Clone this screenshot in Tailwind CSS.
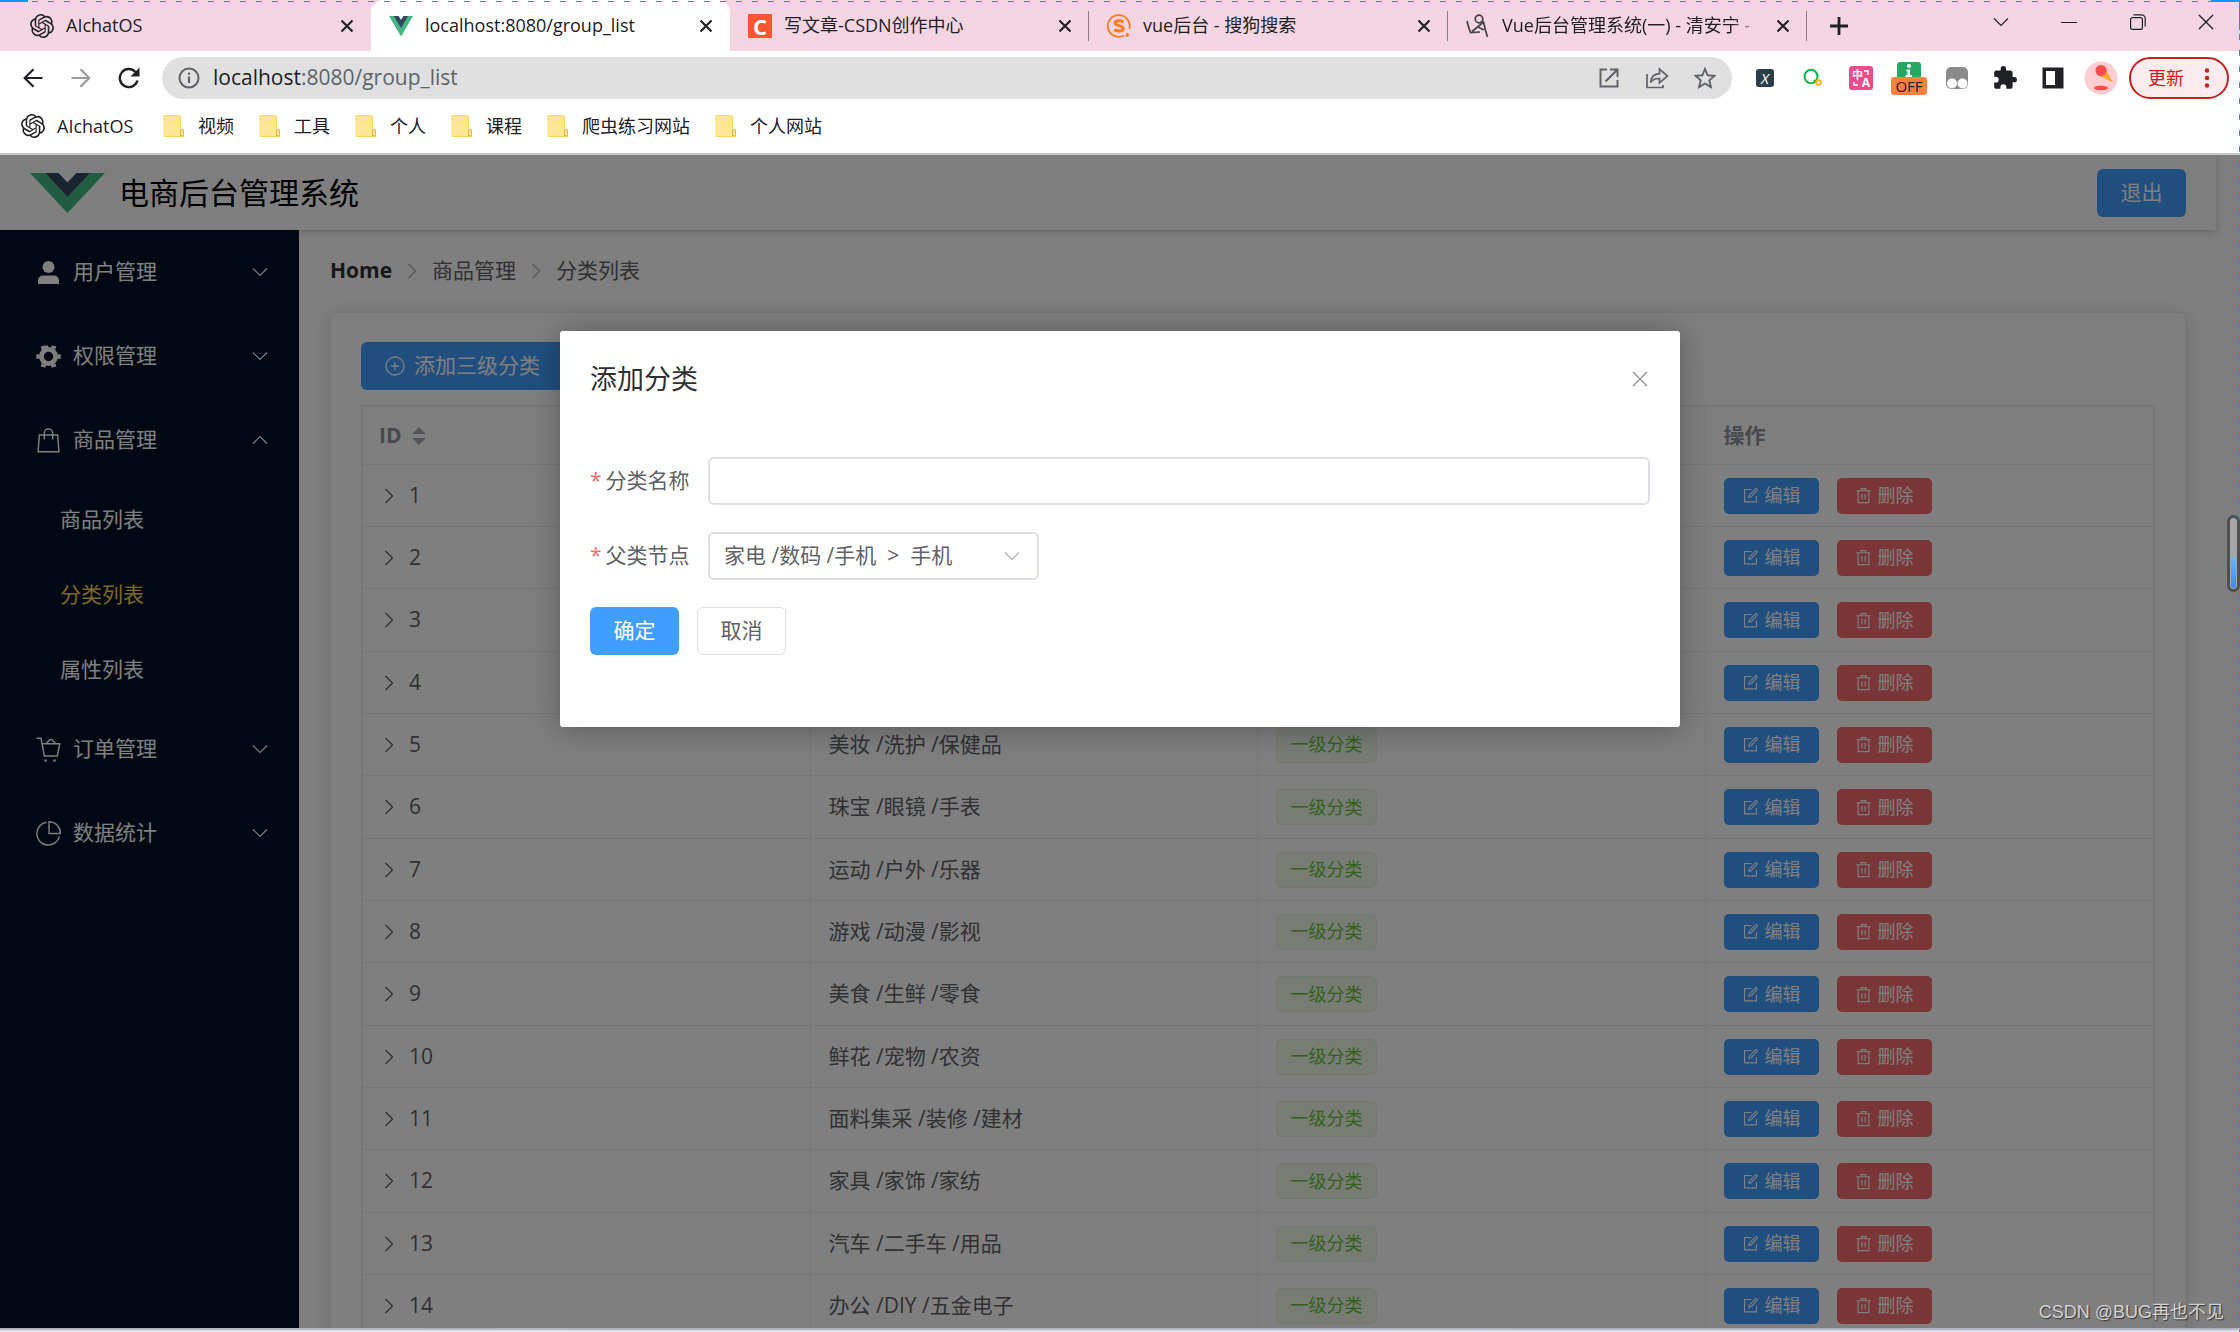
<!DOCTYPE html>
<html lang="zh-CN">
<head>
<meta charset="utf-8">
<title>电商后台管理系统</title>
<script src="https://cdn.jsdelivr.net/npm/@tailwindcss/browser@4"></script>
</head>
<body class="relative flex h-screen flex-col overflow-hidden bg-white font-['Open_Sans','Noto_Sans_CJK_SC',sans-serif] text-[#202124]">

<svg class="hidden" aria-hidden="true">
  <symbol id="openai" viewBox="0 0 24 24"><path fill="currentColor" d="M22.2819 9.8211a5.9847 5.9847 0 0 0-.5157-4.9108 6.0462 6.0462 0 0 0-6.5098-2.9A6.0651 6.0651 0 0 0 4.9807 4.1818a5.9847 5.9847 0 0 0-3.9977 2.9 6.0462 6.0462 0 0 0 .7427 7.0966 5.98 5.98 0 0 0 .511 4.9107 6.051 6.051 0 0 0 6.5146 2.9001A5.9847 5.9847 0 0 0 13.2599 24a6.0557 6.0557 0 0 0 5.7718-4.2058 5.9894 5.9894 0 0 0 3.9977-2.9001 6.0557 6.0557 0 0 0-.7475-7.0729zm-9.022 12.6081a4.4755 4.4755 0 0 1-2.8764-1.0408l.1419-.0804 4.7783-2.7582a.7948.7948 0 0 0 .3927-.6813v-6.7369l2.02 1.1686a.071.071 0 0 1 .038.052v5.5826a4.504 4.504 0 0 1-4.4945 4.4944zm-9.6607-4.1254a4.4708 4.4708 0 0 1-.5346-3.0137l.142.0852 4.783 2.7582a.7712.7712 0 0 0 .7806 0l5.8428-3.3685v2.3324a.0804.0804 0 0 1-.0332.0615L9.74 19.9502a4.4992 4.4992 0 0 1-6.1408-1.6464zM2.3408 7.8956a4.485 4.485 0 0 1 2.3655-1.9728V11.6a.7664.7664 0 0 0 .3879.6765l5.8144 3.3543-2.0201 1.1685a.0757.0757 0 0 1-.071 0l-4.8303-2.7865A4.504 4.504 0 0 1 2.3408 7.872zm16.5963 3.8558L13.1038 8.364 15.1192 7.2a.0757.0757 0 0 1 .071 0l4.8303 2.7913a4.4944 4.4944 0 0 1-.6765 8.1042v-5.6772a.79.79 0 0 0-.407-.667zm2.0107-3.0231l-.142-.0852-4.7735-2.7818a.7759.7759 0 0 0-.7854 0L9.409 9.2297V6.8974a.0662.0662 0 0 1 .0284-.0615l4.8303-2.7866a4.4992 4.4992 0 0 1 6.6802 4.66zM8.3065 12.863l-2.02-1.1638a.0804.0804 0 0 1-.038-.0567V6.0742a4.4992 4.4992 0 0 1 7.3757-3.4537l-.142.0805L8.704 5.459a.7948.7948 0 0 0-.3927.6813zm1.0976-2.3654l2.602-1.4998 2.6069 1.4998v2.9994l-2.5974 1.4997-2.6067-1.4997Z"/></symbol>
  <symbol id="x" viewBox="0 0 16 16"><path d="M2.5 2.5l11 11M13.5 2.5l-11 11" fill="none" stroke="currentColor" stroke-width="2.2"/></symbol>
  <symbol id="xthin" viewBox="0 0 16 16"><path d="M1 1l14 14M15 1L1 15" fill="none" stroke="currentColor" stroke-width="1.4"/></symbol>
  <symbol id="folder" viewBox="0 0 24 24"><path d="M2 1.5h15a1.5 1.5 0 0 1 1.500 1.500v13h1.500a1.500 1.500 0 0 1 1.500 1.500v5H2z" fill="#ffe694" stroke="#fbd65a"/><path d="M18.500 22v-5a1.500 1.500 0 0 1 3 0v5z" fill="#ffe694" stroke="#e6b93c"/></symbol>
  <symbol id="vue" viewBox="0 0 75 40" ><path d="M0 0h15l22.500 24L60 0h15L37.500 40z" fill="#41b883"/><path d="M15 0h13.500l9 9.500L46.500 0H60L37.500 24z" fill="#35495e"/></symbol>
  <symbol id="down" viewBox="0 0 16 16"><path d="M1 4.500l7 7 7-7" fill="none" stroke="currentColor" stroke-width="1.200"/></symbol>
  <symbol id="up" viewBox="0 0 16 16"><path d="M1 11.500l7-7 7 7" fill="none" stroke="currentColor" stroke-width="1.200"/></symbol>
  <symbol id="right" viewBox="0 0 16 16"><path d="M4.500 1l7 7-7 7" fill="none" stroke="currentColor" stroke-width="1.300"/></symbol>
  <symbol id="edit" viewBox="0 0 18 18"><path d="M10 2.700H2.700v13h12.600V9.500M7.300 11l.600-2.600 6.200-6.200a1.100 1.100 0 0 1 1.700 1.700L9.700 10.300z" fill="none" stroke="currentColor" stroke-width="1.200"/></symbol>
  <symbol id="trash" viewBox="0 0 18 18"><path d="M1.500 4h15M6.500 4V1.700h5V4M3.300 4v12.500h11.400V4M7.300 7.500v5.700M10.700 7.500v5.700" fill="none" stroke="currentColor" stroke-width="1.200"/></symbol>
</svg>

<!-- tab strip -->
<div class="flex h-[51px] shrink-0 bg-[#f6d5e3] pl-3 text-[18px]">
  <div class="flex w-[359px] items-center gap-3 pr-4 pl-[18px]">
    <svg class="size-6 shrink-0"><use href="#openai"/></svg>
    <span class="flex-1 truncate">AIchatOS</span>
    <button aria-label="关闭" class="size-4"><svg class="size-4"><use href="#x"/></svg></button>
  </div>
  <div class="flex w-[359px] items-center gap-3 rounded-t-xl bg-white pr-4 pl-[18px]">
    <svg class="size-6 shrink-0" viewBox="0 0 24 24"><path d="M0 2h9.500l2.500 4 2.500-4H24L12 22.500z" fill="#41b883"/><path d="M4.800 2h4.700l2.500 4 2.500-4h4.700L12 14z" fill="#35495e"/></svg>
    <span class="flex-1 truncate">localhost:8080/group_list</span>
    <button aria-label="关闭" class="size-4"><svg class="size-4"><use href="#x"/></svg></button>
  </div>
  <div class="relative flex w-[359px] items-center gap-3 pr-4 pl-[18px] after:absolute after:top-[11px] after:right-0 after:h-[30px] after:w-px after:bg-[#8f7b84]">
    <span class="flex size-6 shrink-0 items-center justify-center bg-[#fc5531] text-[22px] leading-6 font-bold text-white">C</span>
    <span class="flex-1 truncate">写文章-CSDN创作中心</span>
    <button aria-label="关闭" class="size-4"><svg class="size-4"><use href="#x"/></svg></button>
  </div>
  <div class="relative flex w-[359px] items-center gap-3 pr-4 pl-[18px] after:absolute after:top-[11px] after:right-0 after:h-[30px] after:w-px after:bg-[#8f7b84]">
    <svg class="size-6 shrink-0" viewBox="0 0 24 24" fill="none" stroke="#fb7a1e"><path d="M17 21.500A11 10.800 0 1 1 22.300 15" stroke-width="1.800"/><path d="M16.500 7.800c-3-1.800-8.500-1.300-8.500 1.300 0 3.400 8.300 1.600 8.300 5.400 0 3-6.300 3-9 1.200" stroke-width="3"/><path d="M21 19.500l-1.500 3" stroke-width="3"/></svg>
    <span class="flex-1 truncate">vue后台 - 搜狗搜索</span>
    <button aria-label="关闭" class="size-4"><svg class="size-4"><use href="#x"/></svg></button>
  </div>
  <div class="relative flex w-[359px] items-center gap-3 pr-4 pl-[18px] after:absolute after:top-[11px] after:right-0 after:h-[30px] after:w-px after:bg-[#8f7b84]">
    <svg class="size-6 shrink-0" viewBox="0 0 24 24" fill="none" stroke="#444" stroke-width="1.700"><circle cx="13" cy="5" r="3.800"/><path d="M1 7c1 4 2 8 3.500 11.500L14 18M6 17.500L17.500 8c1 4 2 9 4 15M12 13l6 3"/></svg>
    <span class="flex-1 [mask-image:linear-gradient(to_right,black_88%,transparent)] whitespace-nowrap">Vue后台管理系统(一) - 清安宁 -</span>
    <button aria-label="关闭" class="size-4"><svg class="size-4"><use href="#x"/></svg></button>
  </div>
  <button aria-label="新标签页" class="flex w-16 items-center justify-center"><svg class="size-5" viewBox="0 0 20 20"><path d="M10 1v18M1 10h18" stroke="currentColor" stroke-width="2.800"/></svg></button>
  <div class="ml-auto flex h-[43px]">
    <button aria-label="搜索标签页" class="flex w-[69px] items-center justify-center"><svg class="size-4"><use href="#down"/></svg></button>
    <button aria-label="最小化" class="flex w-[68px] items-center justify-center"><svg class="size-4" viewBox="0 0 16 16"><path d="M0 8.500h16" stroke="currentColor"/></svg></button>
    <button aria-label="还原" class="flex w-[69px] items-center justify-center"><svg class="size-4" viewBox="0 0 16 16" fill="none" stroke="currentColor" stroke-width="1.200"><rect x=".6" y="3.600" width="11.800" height="11.800" rx="2"/><path d="M3.500 .8h8a3.700 3.700 0 0 1 3.700 3.700v8"/></svg></button>
    <button aria-label="关闭窗口" class="flex w-[68px] items-center justify-center"><svg class="size-4"><use href="#xthin"/></svg></button>
  </div>
</div>

<!-- address bar -->
<div class="flex shrink-0 items-center pt-[6px] pr-[11px] pl-[9px]">
  <button aria-label="后退" class="flex w-12 justify-center"><svg class="size-5" viewBox="0 0 20 20" fill="none" stroke="currentColor" stroke-width="2.200"><path d="M19.500 10H2M10.500 1.200L1.700 10l8.800 8.800"/></svg></button>
  <button aria-label="前进" class="flex w-12 justify-center text-[#9b9b9b]"><svg class="size-5" viewBox="0 0 20 20" fill="none" stroke="currentColor" stroke-width="2.200"><path d="M.5 10H18M9.500 1.200l8.800 8.800-8.800 8.800"/></svg></button>
  <button aria-label="重新加载" class="mr-[9px] flex w-12 justify-center"><svg class="size-[22px]" viewBox="0 0 22 22"><path d="M19.500 13.500A9 9 0 1 1 17.500 5" fill="none" stroke="currentColor" stroke-width="2.400"/><path d="M21.500 .500v9h-9z" fill="currentColor"/></svg></button>
  <div class="flex h-[42px] flex-1 items-center rounded-full bg-[#e0e0e0] pr-4 pl-4 text-[#5f6368]">
    <svg class="mr-[13px] size-[22px] shrink-0" viewBox="0 0 22 22"><circle cx="11" cy="11" r="9.500" fill="none" stroke="currentColor" stroke-width="2"/><path d="M11 9.500V16M11 5.500v2.300" stroke="currentColor" stroke-width="2.200"/></svg>
    <div class="flex-1 text-[21px]"><span class="text-[#202124]">localhost</span>:8080/group_list</div>
    <div class="flex items-center gap-[25px]">
      <button aria-label="打开"><svg class="size-[22px]" viewBox="0 0 22 22" fill="none" stroke="currentColor" stroke-width="2"><path d="M9 2.500H2.500v17h17V13M12 2.500h7.500V10M19.500 2.500L7.500 14.500"/></svg></button>
      <button aria-label="分享"><svg class="size-6" viewBox="0 0 24 24" fill="none" stroke="currentColor" stroke-width="1.700"><path d="M2 8v13.500h16V19M5.500 16.500C6 11 9 8 14.500 7.700V3L22.500 10l-8 7v-4.500c-4-.2-7 1-9 4z"/></svg></button>
      <button aria-label="收藏"><svg class="size-[22px]" viewBox="0 0 22 22" fill="none" stroke="currentColor" stroke-width="1.900"><path d="M11 2l2.600 6.300 6.900.600-5.200 4.500 1.600 6.700L11 16.500l-5.900 3.600 1.600-6.700L1.500 8.900l6.900-.6z"/></svg></button>
    </div>
  </div>
  <div class="ml-[9px] flex items-center">
    <button class="flex w-12 justify-center"><span class="flex size-[18px] items-center justify-center rounded-[3px] bg-[#2b3d47] text-[15px] leading-none text-white italic">X</span></button>
    <button aria-label="搜索扩展" class="flex w-12 justify-center"><svg class="size-5" viewBox="0 0 20 20" fill="none"><ellipse cx="8" cy="8.500" rx="6.500" ry="6.800" stroke="#12b54a" stroke-width="2"/><path d="M11 12l3 2" stroke="#12b54a" stroke-width="2"/><circle cx="15.500" cy="14.500" r="2.300" stroke="#fbb117" stroke-width="1.800"/></svg></button>
    <button class="flex w-12 justify-center"><span class="relative size-6 rounded-[3px] bg-[#ec4c8b] text-white"><span class="absolute top-[3px] left-[3px] text-[11px] leading-none font-bold">中</span><span class="absolute right-[3px] bottom-[1px] text-[12px] leading-none font-bold">A</span><svg class="absolute inset-0 size-6" viewBox="0 0 24 24" fill="none" stroke="currentColor" stroke-width="1.500"><path d="M15 5h4v4M5 16v3h4"/></svg></span></button>
    <button class="flex w-12 flex-col items-center"><span class="h-[15px] w-6 overflow-hidden rounded-t-[3px] bg-[#26a862]"><svg class="size-6" viewBox="0 0 24 24"><circle cx="12" cy="4" r="2" fill="#fff"/><path d="M9.500 7.500H13V13h2v2H8.500v-2h2V9.500h-1z" fill="#fff"/></svg></span><span class="h-[18px] w-9 rounded-[3px] bg-[#ff7f3f] text-[15px] leading-[18px]">OFF</span></button>
    <button aria-label="脚本扩展" class="flex w-12 justify-center"><svg class="size-6" viewBox="0 0 24 24"><rect x="1" y="1" width="22" height="22" rx="5" fill="#8b8b8b"/><circle cx="7" cy="17.500" r="5" fill="#fff"/><circle cx="17.500" cy="17.500" r="5" fill="#fff"/></svg></button>
    <button aria-label="扩展程序" class="flex w-12 justify-center"><svg class="size-[26px]" viewBox="0 0 24 24"><path fill="currentColor" d="M20.500 11H19V7c0-1.100-.9-2-2-2h-4V3.500a2.500 2.500 0 0 0-5 0V5H4c-1.100 0-2 .9-2 2v3.800h1.500a2.700 2.700 0 0 1 0 5.400H2V20c0 1.100.9 2 2 2h3.800v-1.500a2.700 2.700 0 0 1 5.400 0V22H17c1.100 0 2-.9 2-2v-4h1.500a2.500 2.500 0 0 0 0-5z"/></svg></button>
    <button aria-label="侧边栏" class="flex w-12 justify-center"><svg class="size-[22px]" viewBox="0 0 22 22"><path fill="currentColor" fill-rule="evenodd" d="M.5.500h21v21H.5zM4 4v14h9V4z"/></svg></button>
    <button aria-label="用户" class="flex w-12 justify-center"><svg class="size-[34px]" viewBox="0 0 34 34"><circle cx="17" cy="17" r="16.500" fill="#fdcdd1"/><path d="M21 7l8 14.500L14 14z" fill="#fca52f"/><circle cx="17" cy="9.500" r="5.500" fill="#fb4b4b"/><path d="M10 27c0-3 14-3 14 0s-14 3-14 0z" fill="#fb4b4b"/></svg></button>
  </div>
  <button class="ml-1 flex h-[42px] w-[100px] items-center justify-center gap-5 rounded-full border-2 border-[#c5221f] bg-[#faecec] text-[18px] text-[#c5221f]">更新<svg class="h-5 w-[6px]" viewBox="0 0 6 20" fill="currentColor"><circle cx="3" cy="2.500" r="2.200"/><circle cx="3" cy="10" r="2.200"/><circle cx="3" cy="17.500" r="2.200"/></svg></button>
</div>

<!-- bookmarks -->
<nav class="flex h-[56px] shrink-0 items-center gap-6 border-b-2 border-[#c9cbcb] pl-[21px] text-[18px]">
  <a href="#" class="flex min-w-[117px] items-center gap-3"><svg class="size-6"><use href="#openai"/></svg>AIchatOS</a>
  <a href="#" class="flex items-center gap-3"><svg class="size-6"><use href="#folder"/></svg>视频</a>
  <a href="#" class="flex items-center gap-3"><svg class="size-6"><use href="#folder"/></svg>工具</a>
  <a href="#" class="flex items-center gap-3"><svg class="size-6"><use href="#folder"/></svg>个人</a>
  <a href="#" class="flex items-center gap-3"><svg class="size-6"><use href="#folder"/></svg>课程</a>
  <a href="#" class="flex items-center gap-3"><svg class="size-6"><use href="#folder"/></svg>爬虫练习网站</a>
  <a href="#" class="flex items-center gap-3"><svg class="size-6"><use href="#folder"/></svg>个人网站</a>
</nav>

<!-- application -->
<div class="relative flex min-h-0 flex-1 flex-col overflow-hidden bg-white text-[21px]">
  <header class="mr-6 flex h-[75px] shrink-0 items-center bg-white pr-[30px] pl-[30px] shadow-[0_2px_8px_rgba(0,0,0,0.2)]">
    <svg class="mr-[14px] h-10 w-[75px]"><use href="#vue"/></svg>
    <h1 class="flex-1 text-[30px] leading-none text-black">电商后台管理系统</h1>
    <button class="h-12 w-[89px] rounded-md bg-[#409eff] text-white">退出</button>
  </header>
  <div class="flex min-h-0 flex-1">
    <aside class="z-10 w-[299px] shrink-0 bg-[#001226] text-white">
      <ul>
        <li><a href="#" class="flex h-[84px] items-center pr-[31px] pl-9"><svg class="mr-3 size-[25px]" viewBox="0 0 25 25" fill="currentColor"><circle cx="12.500" cy="7" r="6"/><path d="M2 24v-3.500a5 5 0 0 1 5-5h11a5 5 0 0 1 5 5V24z"/></svg><span class="flex-1">用户管理</span><svg class="size-4"><use href="#down"/></svg></a></li>
        <li><a href="#" class="flex h-[84px] items-center pr-[31px] pl-9"><svg class="mr-3 size-[25px]" viewBox="0 0 24 24"><circle cx="12" cy="12" r="6.800" fill="none" stroke="currentColor" stroke-width="4.500"/><path d="M12 3.500L7.500 4.500 6.700 1.800M16.500 4.500l.8-2.700M3.500 12H.3M20.500 12h3.200M7.500 19.500l-.8 2.700M16.500 19.500l.8 2.700" fill="none" stroke="currentColor" stroke-width="4.500"/></svg><span class="flex-1">权限管理</span><svg class="size-4"><use href="#down"/></svg></a></li>
        <li><a href="#" class="flex h-[84px] items-center pr-[31px] pl-9"><svg class="mr-3 size-[25px]" viewBox="0 0 24 24" fill="none" stroke="currentColor" stroke-width="1.400"><path d="M3.200 6.700h17.600l1.200 16H2zM8 11V5a4 4 0 0 1 8 0v6"/></svg><span class="flex-1">商品管理</span><svg class="size-4"><use href="#up"/></svg></a>
          <ul>
            <li><a href="#" class="flex h-[75px] items-center pl-[60px]">商品列表</a></li>
            <li><a href="#" class="flex h-[75px] items-center pl-[60px] text-[#ffd04b]">分类列表</a></li>
            <li><a href="#" class="flex h-[75px] items-center pl-[60px]">属性列表</a></li>
          </ul>
        </li>
        <li><a href="#" class="flex h-[84px] items-center pr-[31px] pl-9"><svg class="mr-3 size-[25px]" viewBox="0 0 24 24" fill="none" stroke="currentColor" stroke-width="1.400"><path d="M.5 1.200h4.300L8 18.300h12.500L22.800 6.500H6M10 6.500c0-1.500 1.500-1.500 2-2.500a2.400 2.400 0 0 1 4.500 0c.5 1 2 1 2 2.500"/><path d="M8 22.500h2.500M16.500 22.500H19" stroke-width="2"/></svg><span class="flex-1">订单管理</span><svg class="size-4"><use href="#down"/></svg></a></li>
        <li><a href="#" class="flex h-[84px] items-center pr-[31px] pl-9"><svg class="mr-3 size-[25px]" viewBox="0 0 24 24" fill="none" stroke="currentColor" stroke-width="1.400"><path d="M10 1.200A11 11 0 1 0 22.500 14.500M12.500 .800V12h11A11 11 0 0 0 12.500 .800z"/></svg><span class="flex-1">数据统计</span><svg class="size-4"><use href="#down"/></svg></a></li>
      </ul>
    </aside>
    <main class="mr-6 flex-1 pr-[30px] pl-[31px]">
      <nav class="flex h-[82px] items-center text-[#606266]">
        <a href="#" class="font-bold text-[#303133]">Home</a>
        <svg class="mx-3 size-4 text-[#a8abb2]"><use href="#right"/></svg>
        <span>商品管理</span>
        <svg class="mx-3 size-4 text-[#a8abb2]"><use href="#right"/></svg>
        <span>分类列表</span>
      </nav>
      <section class="h-[1100px] rounded-md border border-[#ebeef5] px-[30px] pt-[29px] shadow-[0_2px_18px_rgba(0,0,0,0.15)]">
        <button class="flex h-12 items-center gap-[9px] rounded-md bg-[#409eff] px-6 text-white"><svg class="size-5" viewBox="0 0 20 20" fill="none" stroke="currentColor" stroke-width="1.300"><circle cx="10" cy="10" r="9"/><path d="M10 6v8M6 10h8"/></svg>添加三级分类</button>
        <table class="mt-[15px] w-full table-fixed border-separate border-spacing-0 border-2 border-[#ebeef5] text-left text-[#606266]">
          <thead>
            <tr class="h-[58px] text-[#909399] [&>th]:border-b [&>th]:border-[#ebeef5] [&>th]:px-4 [&>th:last-child]:px-[18px] [&>th:not(:last-child)]:border-r">
              <th><span class="flex items-center gap-[10px]">ID<svg class="h-[18px] w-[14px] text-[#a8abb2]" viewBox="0 0 14 18" fill="currentColor"><path d="M7 0l7 7H0zM7 18l7-7H0z"/></svg></span></th>
              <th></th>
              <th></th>
              <th>操作</th>
            </tr>
          </thead>
          <tbody id="rows" class="[&_td]:border-b [&_td]:border-[#ebeef5] [&_td]:px-[18px] [&_td:not(:last-child)]:border-r [&>tr]:h-[62px] [&>tr:nth-child(3n)]:h-[63px]"></tbody>
        </table>
      </section>
    </main>
  </div>

  <!-- modal -->
  <div class="absolute inset-0 z-20 bg-black/50 pt-[176px]">
    <div role="dialog" aria-label="添加分类" class="mx-auto w-1/2 rounded-[3px] bg-white px-[30px] pb-[72px] shadow-[0_2px_30px_rgba(0,0,0,0.3)]">
      <div class="flex h-[96px] items-center justify-between">
        <h2 class="text-[27px] text-[#303133]">添加分类</h2>
        <button aria-label="关闭" class="mr-[2px] text-[#909399]"><svg class="size-4"><use href="#xthin"/></svg></button>
      </div>
      <form class="flex flex-col gap-[27px] pt-[30px] text-[#606266]">
        <div class="flex h-12 items-center">
          <label for="cat" class="w-[118px]"><span class="mr-1 text-[#f56c6c]">*</span>分类名称</label>
          <input id="cat" type="text" class="h-12 flex-1 rounded-md border-2 border-[#dcdfe6] px-4 outline-none">
        </div>
        <div class="flex h-12 items-center">
          <label for="parent" class="w-[118px]"><span class="mr-1 text-[#f56c6c]">*</span>父类节点</label>
          <div class="relative w-[331px]">
            <select id="parent" class="h-12 w-full appearance-none rounded-md border-2 border-[#dcdfe6] bg-white px-[14px] outline-none"><option>家电 /数码 /手机&nbsp; &gt;&nbsp; 手机</option></select>
            <svg class="pointer-events-none absolute top-4 right-[19px] size-4 text-[#a8abb2]"><use href="#down"/></svg>
          </div>
        </div>
        <div class="flex gap-[18px]">
          <button type="button" class="h-12 w-[89px] rounded-md bg-[#409eff] text-white">确定</button>
          <button type="button" class="h-12 w-[89px] rounded-md border border-[#dcdfe6] bg-white">取消</button>
        </div>
      </form>
    </div>
  </div>
  <div class="absolute right-4 bottom-0 z-30 font-['Liberation_Sans','Noto_Sans_CJK_SC',sans-serif] text-[18px] leading-8 text-[#d2d2d2] [text-shadow:1px_1px_1px_#333]">CSDN @BUG再也不见</div>
</div>

<!-- bottom window edge -->
<div class="h-1 shrink-0 border-t-2 border-[#b1b4bd] bg-linear-to-r from-[#e3e1f2] to-[#d5dfea]"></div>

<!-- capture frame -->
<div class="pointer-events-none absolute inset-x-0 top-[1px] z-40 h-px bg-[repeating-linear-gradient(to_right,#0a9bf5_0_6px,transparent_6px_16px)]"></div>
<div class="pointer-events-none absolute top-[2px] right-0 bottom-0 z-40 w-px bg-[repeating-linear-gradient(to_bottom,#0a9bf5_0_6px,transparent_6px_16px)]"></div>
<div class="pointer-events-none absolute top-0 left-0 z-40 h-[2px] w-7 bg-[#0a9bf5]"></div>
<div class="pointer-events-none absolute top-0 right-0 z-40 h-[30px] w-[29px] border-t-2 border-r border-[#0a9bf5]"></div>

<!-- scroll indicator -->
<div class="absolute top-[515px] right-0 z-40 flex h-[77px] w-[13px] flex-col justify-end rounded-full border-[3px] border-[#505050] bg-[#a6a6a6] px-px pb-px"><div class="h-[31px] rounded-full bg-linear-to-b from-[#63b8ff] to-[#3f87f5]"></div></div>

<script>
const names = ['', '', '', '', '美妆 /洗护 /保健品', '珠宝 /眼镜 /手表', '运动 /户外 /乐器', '游戏 /动漫 /影视', '美食 /生鲜 /零食', '鲜花 /宠物 /农资', '面料集采 /装修 /建材', '家具 /家饰 /家纺', '汽车 /二手车 /用品', '办公 /DIY /五金电子'];
document.getElementById('rows').innerHTML = names.map((name, i) => `
<tr>
  <td><div class="flex items-center gap-3"><button aria-label="展开" class="text-[#606266]"><svg class="block size-4"><use href="#right"/></svg></button>${i + 1}</div></td>
  <td>${name}</td>
  <td>${name ? '<span class="flex h-9 w-[101px] items-center justify-center rounded-md border border-[#e1f3d8] bg-[#f0f9eb] text-[18px] text-[#67c23a]">一级分类</span>' : ''}</td>
  <td><div class="flex gap-[18px] text-[18px] text-white">
    <button class="flex h-9 w-[95px] items-center justify-center gap-[6px] rounded-[5px] bg-[#409eff]"><svg class="size-[17px]"><use href="#edit"/></svg>编辑</button>
    <button class="flex h-9 w-[95px] items-center justify-center gap-[6px] rounded-[5px] bg-[#f56c6c]"><svg class="size-[17px]"><use href="#trash"/></svg>删除</button>
  </div></td>
</tr>`).join('');
</script>
</body>
</html>
